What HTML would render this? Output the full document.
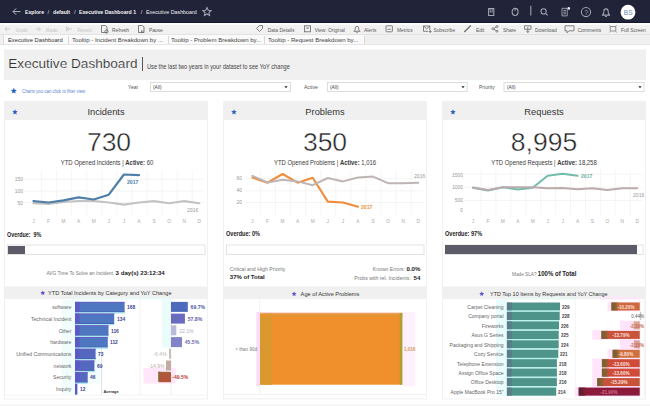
<!DOCTYPE html><html><head><meta charset="utf-8"><style>
html,body{margin:0;padding:0;width:650px;height:406px;overflow:hidden;background:#fff;font-family:"Liberation Sans", sans-serif;}
.t{position:absolute;white-space:nowrap;line-height:1;z-index:5;}
svg{position:absolute;left:0;top:0;}
</style></head><body>
<div style="position:absolute;left:0px;top:0px;width:650px;height:23px;background:#212438;"></div>
<div style="position:absolute;left:0px;top:22px;width:650px;height:1px;background:#15182a;"></div>
<svg width="650" height="406" style="z-index:2" viewBox="0 0 650 406"><g stroke="#b4b6c2" stroke-width="1" fill="none"><path d="M13 11.6h7.5M13 11.6l3.2-3.2M13 11.6l3.2 3.2"/></g><g stroke="#a2a5b3" stroke-width="1.05" fill="none"><path d="M207 7.6l1.25 2.65 2.85.35-2.1 1.95.6 2.85-2.6-1.45-2.6 1.45.6-2.85-2.1-1.95 2.85-.35z"/><path d="M488.6 8.6h5.2v6.8h-5.2z"/><path d="M490.2 8.8v3.6l1-0.9 1 0.9v-3.6" stroke-width="0.8"/><rect x="512.2" y="8.4" width="5.8" height="7" rx="2.9"/><path d="M515.1 8.6v2.4" stroke-width="0.8"/><path d="M530.8 5.8v9.8"/><circle cx="543.6" cy="11.4" r="2.6"/><path d="M545.5 13.3l2.3 2.1"/><path d="M562 8.3h5.2v7.6h-5.2z M563.4 10.4h2.6 M563.4 12.1h2.6 M563.4 13.8h2.6" stroke-width="0.9"/><circle cx="586" cy="12" r="4.6"/><path d="M601.9 15.1h8.2 M602.6 15c1-1 1.3-2.2 1.3-4a2.1 2.1 0 0 1 4.2 0c0 1.8.3 3 1.3 4 M605.1 16.5h1.8"/></g><circle cx="568.8" cy="8.4" r="1.3" fill="#e8e8ee"/><circle cx="628" cy="12.2" r="7.4" fill="#fff"/></svg>


<div class="t" style="left:623.80px;top:10px;font-size:6.5px;color:#6a8ab0;z-index:6;">BS</div>
<div class="t" style="left:584.30px;top:10px;font-size:6.9px;color:#a2a5b3;z-index:6;">?</div>
<div class="t" style="left:25.30px;top:10px;font-size:5.9px;color:#f4f4f7;font-weight:bold;transform:scaleX(0.88);transform-origin:0 0;">Explore</div>
<div class="t" style="left:47.60px;top:9px;font-size:6px;color:#dcdde4;">/</div>
<div class="t" style="left:52.60px;top:10px;font-size:5.9px;color:#f4f4f7;font-weight:bold;transform:scaleX(0.88);transform-origin:0 0;">default</div>
<div class="t" style="left:74.00px;top:9px;font-size:6px;color:#dcdde4;">/</div>
<div class="t" style="left:79.30px;top:10px;font-size:5.9px;color:#f4f4f7;font-weight:bold;transform:scaleX(0.88);transform-origin:0 0;">Executive Dashboard 1</div>
<div class="t" style="left:140.80px;top:9px;font-size:6px;color:#dcdde4;">/</div>
<div class="t" style="left:146.00px;top:9px;font-size:6.0px;color:#ececf0;transform:scaleX(0.89);transform-origin:0 0;">Executive Dashboard</div>
<div style="position:absolute;left:0px;top:23px;width:650px;height:2px;background:#fbfbfb;"></div>
<div style="position:absolute;left:0px;top:25px;width:650px;height:9px;background:#f1f1f1;"></div>
<div style="position:absolute;left:0px;top:34px;width:650px;height:1px;background:#e3e3e3;"></div>
<div class="t" style="left:15.70px;top:29px;font-size:4.9px;color:#c4c4c4;">Undo</div>
<div class="t" style="left:46.00px;top:29px;font-size:4.9px;color:#c4c4c4;">Redo</div>
<div class="t" style="left:77.50px;top:29px;font-size:4.9px;color:#c4c4c4;">Revert</div>
<div class="t" style="left:111.90px;top:29px;font-size:4.9px;color:#5a5a5a;">Refresh</div>
<div class="t" style="left:148.90px;top:29px;font-size:4.9px;color:#5a5a5a;">Pause</div>
<div class="t" style="left:267.70px;top:29px;font-size:4.9px;color:#5a5a5a;">Data Details</div>
<div class="t" style="left:314.80px;top:29px;font-size:4.9px;color:#5a5a5a;">View: Original</div>
<div class="t" style="left:364.00px;top:29px;font-size:4.9px;color:#5a5a5a;">Alerts</div>
<div class="t" style="left:397.00px;top:29px;font-size:4.9px;color:#5a5a5a;">Metrics</div>
<div class="t" style="left:433.40px;top:29px;font-size:4.9px;color:#5a5a5a;">Subscribe</div>
<div class="t" style="left:476.00px;top:29px;font-size:4.9px;color:#5a5a5a;">Edit</div>
<div class="t" style="left:503.00px;top:29px;font-size:4.9px;color:#5a5a5a;">Share</div>
<div class="t" style="left:535.00px;top:29px;font-size:4.9px;color:#5a5a5a;">Download</div>
<div class="t" style="left:577.50px;top:29px;font-size:4.9px;color:#5a5a5a;">Comments</div>
<div class="t" style="left:621.00px;top:29px;font-size:4.9px;color:#5a5a5a;">Full Screen</div>
<svg width="650" height="406" style="z-index:2" viewBox="0 0 650 406"><g stroke="#c4c4c4" stroke-width="0.8" fill="none"><path d="M5 29h5M5 29l2-2M5 29l2 2"/><path d="M35.5 29h5M40.5 29l-2-2M40.5 29l-2 2"/><path d="M66.5 26.5v5M67 29h5M67 29l2-2M67 29l2 2"/></g><g stroke="#666" stroke-width="0.8" fill="none"><path d="M101.5 25.5h4l1.5 1.5v5.5h-5.5z"/><circle cx="106.5" cy="31.5" r="1.6"/><path d="M138.5 25.5h4l1.5 1.5v5.5h-5.5z"/><path d="M141.5 30.5v2.5M143 30.5v2.5"/><path d="M256.5 28.5l3-3h3v3l-3 3z"/><rect x="304.5" y="25.8" width="6" height="6" /><path d="M306 28h3"/><path d="M353.7 31.3h6.6 M354.4 31.2c.8-.8 1-1.8 1-3.3a1.6 1.6 0 0 1 3.2 0c0 1.5.2 2.5 1 3.3 M356.3 32.6h1.4"/><rect x="386" y="25.8" width="6.4" height="6" rx="0.6"/><path d="M387.6 29.3h3.2"/><path d="M429.8 30.2v-4.2h-6.3v5.3h4.6"/><path d="M423.5 26l3.2 2.8 3.1-2.8"/><path d="M428.8 31.6h2.8 M430.2 30.2v2.8"/><path d="M464.3 32l6.5-6.5" stroke-width="1.1"/><circle cx="493" cy="28.8" r="1"/><circle cx="497" cy="26.5" r="1"/><circle cx="497" cy="31.2" r="1"/><path d="M494 28.3l2-1.3M494 29.3l2 1.3"/><path d="M524.5 25.8h6.5v3.5h-6.5z M527.8 27v5.5M526.3 31l1.5 1.5 1.5-1.5"/><path d="M565 25.8h9v5h-5l-2 2v-2h-2z"/><path d="M610.6 26.6h4.8 M610.6 31h4.8 M610.2 27v3.6 M615.8 27v3.6" stroke-width="0.7"/><path d="M609.4 25.4l1.4 1.4 M616.6 25.4l-1.4 1.4 M609.4 32.2l1.4-1.4 M616.6 32.2l-1.4-1.4" stroke-width="0.8"/></g></svg>
<div style="position:absolute;left:0px;top:35px;width:650px;height:9px;background:#f0f0f0;"></div>
<div style="position:absolute;left:4px;top:35px;width:360px;height:9px;background:#fafafa;"></div>
<div style="position:absolute;left:0px;top:44px;width:650px;height:1px;background:#e6e6e6;"></div>
<div style="position:absolute;left:3px;top:35px;width:1px;height:10px;background:#dcdcdc;"></div>
<div style="position:absolute;left:67.8px;top:36px;width:1px;height:8px;background:#d8d8d8;"></div>
<div style="position:absolute;left:167.5px;top:36px;width:1px;height:8px;background:#d8d8d8;"></div>
<div style="position:absolute;left:264px;top:36px;width:1px;height:8px;background:#d8d8d8;"></div>
<div style="position:absolute;left:364px;top:36px;width:1px;height:8px;background:#d8d8d8;"></div>
<div class="t" style="left:8.30px;top:37px;font-size:6.2px;color:#333;transform:scaleX(0.93);transform-origin:0 0;">Executive Dashboard</div>
<div class="t" style="left:72.00px;top:37px;font-size:6.2px;color:#444;transform:scaleX(0.98);transform-origin:0 0;">Tooltip - Incident Breakdown by ...</div>
<div class="t" style="left:171.00px;top:37px;font-size:6.2px;color:#444;transform:scaleX(0.98);transform-origin:0 0;">Tooltip - Problem Breakdown by...</div>
<div class="t" style="left:268.00px;top:37px;font-size:6.2px;color:#444;transform:scaleX(0.98);transform-origin:0 0;">Tooltip - Request Breakdown by...</div>
<div style="position:absolute;left:4px;top:50px;width:642px;height:30px;background:#f0f0f0;"></div>
<div style="position:absolute;left:4px;top:49px;width:642px;height:1px;background:#f6f6f6;"></div>
<div class="t" style="left:8.30px;top:57px;font-size:13.6px;color:#333;-webkit-text-stroke:0.15px #f0f0f0;">Executive Dashboard</div>
<div style="position:absolute;left:142px;top:57px;width:1.3px;height:14px;background:#555;"></div>
<div class="t" style="left:147.00px;top:64px;font-size:6.6px;color:#444;transform:scaleX(0.857);transform-origin:0 0;">Use the last two years in your dataset to see YoY change</div>
<svg width="650" height="406" style="z-index:1" viewBox="0 0 650 406"><polygon points="13.80,87.80 14.65,89.84 16.84,90.01 15.17,91.44 15.68,93.59 13.80,92.44 11.92,93.59 12.43,91.44 10.76,90.01 12.95,89.84" fill="#2b63c4"/><rect x="150.5" y="82.5" width="140.0" height="9" fill="#fff" stroke="#d9d9d9" stroke-width="0.9"/><path d="M284.4 86.2h3.2l-1.6 2z" fill="#222"/><rect x="327.4" y="82.5" width="139.8" height="9" fill="#fff" stroke="#d9d9d9" stroke-width="0.9"/><path d="M461.4 86.2h3.2l-1.6 2z" fill="#222"/><rect x="504" y="82.5" width="140" height="9" fill="#fff" stroke="#d9d9d9" stroke-width="0.9"/><path d="M638.4 86.2h3.2l-1.6 2z" fill="#222"/></svg>
<div class="t" style="left:22.00px;top:89px;font-size:5.2px;color:#5a86d0;transform:scaleX(0.84);transform-origin:0 0;">Charts you can click to filter view</div>
<div class="t" style="left:128.40px;top:85px;font-size:5.6px;color:#555;transform:scaleX(0.9);transform-origin:0 0;">Year</div>
<div class="t" style="left:304.00px;top:85px;font-size:5.6px;color:#555;transform:scaleX(0.9);transform-origin:0 0;">Active</div>
<div class="t" style="left:479.00px;top:85px;font-size:5.6px;color:#555;transform:scaleX(0.9);transform-origin:0 0;">Priority</div>
<div class="t" style="left:153.00px;top:85px;font-size:5.4px;color:#444;transform:scaleX(0.9);transform-origin:0 0;">(All)</div>
<div class="t" style="left:330.00px;top:85px;font-size:5.4px;color:#444;transform:scaleX(0.9);transform-origin:0 0;">(All)</div>
<div class="t" style="left:506.50px;top:85px;font-size:5.4px;color:#444;transform:scaleX(0.9);transform-origin:0 0;">(All)</div>
<svg width="650" height="406" style="z-index:1" viewBox="0 0 650 406"><rect x="4.5" y="101.5" width="203" height="297.5" fill="#fff" stroke="#f1f1f1" stroke-width="1"/><rect x="5" y="101.5" width="202" height="18.5" fill="#f0f0f0"/><polygon points="15.00,109.20 15.77,111.04 17.76,111.20 16.24,112.50 16.70,114.45 15.00,113.41 13.30,114.45 13.76,112.50 12.24,111.20 14.23,111.04" fill="#2c5fb8"/><rect x="5" y="286.5" width="202" height="12.5" fill="#f0f0f0"/><rect x="7.5" y="245" width="197.5" height="9.5" fill="#fff" stroke="#e0e0e0" stroke-width="0.9"/><rect x="223.5" y="101.5" width="203" height="297.5" fill="#fff" stroke="#f1f1f1" stroke-width="1"/><rect x="224" y="101.5" width="202" height="18.5" fill="#f0f0f0"/><polygon points="234.00,109.20 234.77,111.04 236.76,111.20 235.24,112.50 235.70,114.45 234.00,113.41 232.30,114.45 232.76,112.50 231.24,111.20 233.23,111.04" fill="#2c5fb8"/><rect x="224" y="286.5" width="202" height="12.5" fill="#f0f0f0"/><rect x="226.5" y="245" width="197.5" height="9.5" fill="#fff" stroke="#e0e0e0" stroke-width="0.9"/><rect x="442.5" y="101.5" width="203" height="297.5" fill="#fff" stroke="#f1f1f1" stroke-width="1"/><rect x="443" y="101.5" width="202" height="18.5" fill="#f0f0f0"/><polygon points="453.00,109.20 453.77,111.04 455.76,111.20 454.24,112.50 454.70,114.45 453.00,113.41 451.30,114.45 451.76,112.50 450.24,111.20 452.23,111.04" fill="#2c5fb8"/><rect x="443" y="286.5" width="202" height="12.5" fill="#f0f0f0"/><rect x="445.5" y="245" width="197.5" height="9.5" fill="#fff" stroke="#e0e0e0" stroke-width="0.9"/></svg>
<div class="t" style="left:-44.00px;width:300px;text-align:center;top:108px;font-size:9.3px;color:#333;">Incidents</div>
<div class="t" style="left:-41.00px;width:300px;text-align:center;top:129px;font-size:26.5px;color:#222;-webkit-text-stroke:0.45px #fff;">730</div>
<div class="t" style="left:-42.80px;width:300px;text-align:center;top:160px;font-size:6.4px;color:#3a3a3a;transform:scaleX(0.925);transform-origin:50% 0;">YTD Opened Incidents | <b>Active:</b> 60</div>
<div class="t" style="left:175.00px;width:300px;text-align:center;top:108px;font-size:9.3px;color:#333;">Problems</div>
<div class="t" style="left:175.00px;width:300px;text-align:center;top:129px;font-size:26.5px;color:#222;-webkit-text-stroke:0.45px #fff;">350</div>
<div class="t" style="left:175.00px;width:300px;text-align:center;top:160px;font-size:6.4px;color:#3a3a3a;transform:scaleX(0.925);transform-origin:50% 0;">YTD Opened Problems | <b>Active:</b> 1,016</div>
<div class="t" style="left:394.00px;width:300px;text-align:center;top:108px;font-size:9.3px;color:#333;">Requests</div>
<div class="t" style="left:394.00px;width:300px;text-align:center;top:129px;font-size:26.5px;color:#222;-webkit-text-stroke:0.45px #fff;">8,995</div>
<div class="t" style="left:394.00px;width:300px;text-align:center;top:160px;font-size:6.4px;color:#3a3a3a;transform:scaleX(0.925);transform-origin:50% 0;">YTD Opened Requests | <b>Active:</b> 18,258</div>
<div class="t" style="left:7.40px;top:232px;font-size:6.8px;color:#222;font-weight:bold;transform:scaleX(0.79);transform-origin:0 0;">Overdue:&nbsp; 9%</div>
<div class="t" style="left:226.00px;top:231px;font-size:6.8px;color:#222;font-weight:bold;transform:scaleX(0.82);transform-origin:0 0;">Overdue: 0%</div>
<div class="t" style="left:444.80px;top:231px;font-size:6.8px;color:#222;font-weight:bold;transform:scaleX(0.82);transform-origin:0 0;">Overdue: 97%</div>
<div style="position:absolute;left:8px;top:245.8px;width:17px;height:8.2px;background:#5b5c67;z-index:2;"></div>
<div style="position:absolute;left:445px;top:245.2px;width:192px;height:9px;background:#5b5c67;z-index:2;"></div>
<div class="t" style="left:115.60px;top:270px;font-size:6.1px;color:#222;font-weight:bold;">3 day(s) 23:12:34</div>
<div class="t" style="left:-187.00px;width:300px;text-align:right;top:272px;font-size:4.85px;color:#777;">AVG Time To Solve an Incident</div>
<div class="t" style="left:229.80px;top:267px;font-size:5.2px;color:#777;">Critical and High Priority</div>
<div class="t" style="left:229.80px;top:274px;font-size:6.0px;color:#222;font-weight:bold;">37% of Total</div>
<div class="t" style="left:120.40px;width:300px;text-align:right;top:268px;font-size:5.1px;color:#777;margin-top:-1.6px;">Known Errors: <b style="color:#222;font-size:6.1px">0.0%</b></div>
<div class="t" style="left:120.40px;width:300px;text-align:right;top:277px;font-size:5.2px;color:#777;margin-top:-2.4px;">Probs with rel. Incidents: &nbsp;<b style="color:#222;font-size:6.1px">54</b></div>
<div class="t" style="left:512.20px;top:271px;font-size:4.9px;color:#777;transform:scaleX(0.96);transform-origin:0 0;">Made SLA? <b style="color:#222;font-size:6.3px">100% of Total</b></div>
<svg width="650" height="406" style="z-index:2" viewBox="0 0 650 406"><polygon points="42.80,290.40 43.49,292.05 45.27,292.20 43.91,293.36 44.33,295.10 42.80,294.17 41.27,295.10 41.69,293.36 40.33,292.20 42.11,292.05" fill="#5a4fd0"/><polygon points="294.10,291.40 294.79,293.05 296.57,293.20 295.21,294.36 295.63,296.10 294.10,295.17 292.57,296.10 292.99,294.36 291.63,293.20 293.41,293.05" fill="#5a4fd0"/><polygon points="481.70,291.30 482.39,292.95 484.17,293.10 482.81,294.26 483.23,296.00 481.70,295.07 480.17,296.00 480.59,294.26 479.23,293.10 481.01,292.95" fill="#5a4fd0"/></svg>
<div class="t" style="left:48.00px;top:291px;font-size:5.6px;color:#333;">YTD Total Incidents by Category and YoY Change</div>
<div class="t" style="left:300.60px;top:292px;font-size:5.7px;color:#333;">Age of Active Problems</div>
<div class="t" style="left:489.50px;top:292px;font-size:5.8px;color:#333;transform:scaleX(0.94);transform-origin:0 0;">YTD Top 10 Items by Requests and YoY Change</div>
<svg width="650" height="406" style="z-index:2" viewBox="0 0 650 406"><path d="M23 179.2H204" stroke="#f1f1f1" stroke-width="0.8"/><path d="M23 191H204" stroke="#f1f1f1" stroke-width="0.8"/><path d="M23 202.5H204" stroke="#f1f1f1" stroke-width="0.8"/><path d="M41.4 170V215" stroke="#f3f3f3" stroke-width="0.8"/><path d="M56.5 170V215" stroke="#f3f3f3" stroke-width="0.8"/><path d="M71.6 170V215" stroke="#f3f3f3" stroke-width="0.8"/><path d="M86.7 170V215" stroke="#f3f3f3" stroke-width="0.8"/><path d="M101.8 170V215" stroke="#f3f3f3" stroke-width="0.8"/><path d="M116.8 170V215" stroke="#f3f3f3" stroke-width="0.8"/><path d="M131.9 170V215" stroke="#f3f3f3" stroke-width="0.8"/><path d="M147.0 170V215" stroke="#f3f3f3" stroke-width="0.8"/><path d="M162.1 170V215" stroke="#f3f3f3" stroke-width="0.8"/><path d="M177.2 170V215" stroke="#f3f3f3" stroke-width="0.8"/><path d="M192.2 170V215" stroke="#f3f3f3" stroke-width="0.8"/><polyline points="33.4,203.3 48.5,204.0 63.6,202.0 78.6,201.0 93.7,201.0 108.8,202.5 123.9,204.6 139.0,202.5 154.0,201.1 169.1,203.3 184.2,201.1 199.3,203.3" fill="none" stroke="#c3c3c3" stroke-width="2.1" stroke-linejoin="round" stroke-linecap="round"/><polyline points="33.4,201.1 48.5,202.5 63.6,200.4 78.6,197.3 93.7,199.5 108.8,194.7 123.9,174.5 139.0,175.2" fill="none" stroke="#4f7fa8" stroke-width="2.2" stroke-linejoin="round" stroke-linecap="round"/><path d="M245.5 178.7H423" stroke="#f1f1f1" stroke-width="0.8"/><path d="M245.5 190.8H423" stroke="#f1f1f1" stroke-width="0.8"/><path d="M245.5 202.5H423" stroke="#f1f1f1" stroke-width="0.8"/><path d="M260.4 170V215" stroke="#f3f3f3" stroke-width="0.8"/><path d="M275.5 170V215" stroke="#f3f3f3" stroke-width="0.8"/><path d="M290.6 170V215" stroke="#f3f3f3" stroke-width="0.8"/><path d="M305.7 170V215" stroke="#f3f3f3" stroke-width="0.8"/><path d="M320.8 170V215" stroke="#f3f3f3" stroke-width="0.8"/><path d="M335.8 170V215" stroke="#f3f3f3" stroke-width="0.8"/><path d="M350.9 170V215" stroke="#f3f3f3" stroke-width="0.8"/><path d="M366.0 170V215" stroke="#f3f3f3" stroke-width="0.8"/><path d="M381.1 170V215" stroke="#f3f3f3" stroke-width="0.8"/><path d="M396.2 170V215" stroke="#f3f3f3" stroke-width="0.8"/><path d="M411.2 170V215" stroke="#f3f3f3" stroke-width="0.8"/><polyline points="252.4,177.5 267.5,182.7 282.6,174.0 297.6,182.7 312.7,177.8 327.8,201.6 342.9,202.5 358.0,206.8" fill="none" stroke="#f08c3c" stroke-width="2.1" stroke-linejoin="round" stroke-linecap="round"/><polyline points="252.4,175.8 267.5,182.5 282.6,179.7 297.6,181.4 312.7,185.2 327.8,178.0 342.9,181.4 358.0,177.5 373.0,176.6 388.1,183.2 403.2,183.2 418.3,182.7" fill="none" stroke="#bfb5b5" stroke-width="2.0" stroke-linejoin="round" stroke-linecap="round"/><path d="M464 174.2H642" stroke="#f1f1f1" stroke-width="0.8"/><path d="M464 187.2H642" stroke="#f1f1f1" stroke-width="0.8"/><path d="M464 200.5H642" stroke="#f1f1f1" stroke-width="0.8"/><path d="M481.0 170V215" stroke="#f3f3f3" stroke-width="0.8"/><path d="M495.9 170V215" stroke="#f3f3f3" stroke-width="0.8"/><path d="M510.8 170V215" stroke="#f3f3f3" stroke-width="0.8"/><path d="M525.8 170V215" stroke="#f3f3f3" stroke-width="0.8"/><path d="M540.7 170V215" stroke="#f3f3f3" stroke-width="0.8"/><path d="M555.6 170V215" stroke="#f3f3f3" stroke-width="0.8"/><path d="M570.5 170V215" stroke="#f3f3f3" stroke-width="0.8"/><path d="M585.5 170V215" stroke="#f3f3f3" stroke-width="0.8"/><path d="M600.4 170V215" stroke="#f3f3f3" stroke-width="0.8"/><path d="M615.3 170V215" stroke="#f3f3f3" stroke-width="0.8"/><path d="M630.3 170V215" stroke="#f3f3f3" stroke-width="0.8"/><polyline points="473.0,187.8 487.9,190.4 502.9,187.3 517.8,189.5 532.7,187.8 547.6,175.8 562.6,173.7 577.5,175.8" fill="none" stroke="#72bcab" stroke-width="2.0" stroke-linejoin="round" stroke-linecap="round"/><polyline points="473.0,187.5 487.9,190.0 502.9,187.3 517.8,187.3 532.7,187.3 547.6,188.3 562.6,188.0 577.5,189.2 592.4,188.3 607.4,190.0 622.3,188.3 637.2,188.3" fill="none" stroke="#bcaaac" stroke-width="2.1" stroke-linejoin="round" stroke-linecap="round"/></svg>
<div class="t" style="left:-116.60px;width:300px;text-align:center;top:220px;font-size:4.8px;color:#aaa;">J</div>
<div class="t" style="left:-101.52px;width:300px;text-align:center;top:220px;font-size:4.8px;color:#aaa;">F</div>
<div class="t" style="left:-86.44px;width:300px;text-align:center;top:220px;font-size:4.8px;color:#aaa;">M</div>
<div class="t" style="left:-71.36px;width:300px;text-align:center;top:220px;font-size:4.8px;color:#aaa;">A</div>
<div class="t" style="left:-56.28px;width:300px;text-align:center;top:220px;font-size:4.8px;color:#aaa;">M</div>
<div class="t" style="left:-41.20px;width:300px;text-align:center;top:220px;font-size:4.8px;color:#aaa;">J</div>
<div class="t" style="left:-26.12px;width:300px;text-align:center;top:220px;font-size:4.8px;color:#aaa;">J</div>
<div class="t" style="left:-11.04px;width:300px;text-align:center;top:220px;font-size:4.8px;color:#aaa;">A</div>
<div class="t" style="left:4.04px;width:300px;text-align:center;top:220px;font-size:4.8px;color:#aaa;">S</div>
<div class="t" style="left:19.12px;width:300px;text-align:center;top:220px;font-size:4.8px;color:#aaa;">O</div>
<div class="t" style="left:34.20px;width:300px;text-align:center;top:220px;font-size:4.8px;color:#aaa;">N</div>
<div class="t" style="left:49.28px;width:300px;text-align:center;top:220px;font-size:4.8px;color:#aaa;">D</div>
<div class="t" style="left:102.40px;width:300px;text-align:center;top:220px;font-size:4.8px;color:#aaa;">J</div>
<div class="t" style="left:117.48px;width:300px;text-align:center;top:220px;font-size:4.8px;color:#aaa;">F</div>
<div class="t" style="left:132.56px;width:300px;text-align:center;top:220px;font-size:4.8px;color:#aaa;">M</div>
<div class="t" style="left:147.64px;width:300px;text-align:center;top:220px;font-size:4.8px;color:#aaa;">A</div>
<div class="t" style="left:162.72px;width:300px;text-align:center;top:220px;font-size:4.8px;color:#aaa;">M</div>
<div class="t" style="left:177.80px;width:300px;text-align:center;top:220px;font-size:4.8px;color:#aaa;">J</div>
<div class="t" style="left:192.88px;width:300px;text-align:center;top:220px;font-size:4.8px;color:#aaa;">J</div>
<div class="t" style="left:207.96px;width:300px;text-align:center;top:220px;font-size:4.8px;color:#aaa;">A</div>
<div class="t" style="left:223.04px;width:300px;text-align:center;top:220px;font-size:4.8px;color:#aaa;">S</div>
<div class="t" style="left:238.12px;width:300px;text-align:center;top:220px;font-size:4.8px;color:#aaa;">O</div>
<div class="t" style="left:253.20px;width:300px;text-align:center;top:220px;font-size:4.8px;color:#aaa;">N</div>
<div class="t" style="left:268.28px;width:300px;text-align:center;top:220px;font-size:4.8px;color:#aaa;">D</div>
<div class="t" style="left:323.00px;width:300px;text-align:center;top:220px;font-size:4.8px;color:#aaa;">J</div>
<div class="t" style="left:337.93px;width:300px;text-align:center;top:220px;font-size:4.8px;color:#aaa;">F</div>
<div class="t" style="left:352.86px;width:300px;text-align:center;top:220px;font-size:4.8px;color:#aaa;">M</div>
<div class="t" style="left:367.79px;width:300px;text-align:center;top:220px;font-size:4.8px;color:#aaa;">A</div>
<div class="t" style="left:382.72px;width:300px;text-align:center;top:220px;font-size:4.8px;color:#aaa;">M</div>
<div class="t" style="left:397.65px;width:300px;text-align:center;top:220px;font-size:4.8px;color:#aaa;">J</div>
<div class="t" style="left:412.58px;width:300px;text-align:center;top:220px;font-size:4.8px;color:#aaa;">J</div>
<div class="t" style="left:427.51px;width:300px;text-align:center;top:220px;font-size:4.8px;color:#aaa;">A</div>
<div class="t" style="left:442.44px;width:300px;text-align:center;top:220px;font-size:4.8px;color:#aaa;">S</div>
<div class="t" style="left:457.37px;width:300px;text-align:center;top:220px;font-size:4.8px;color:#aaa;">O</div>
<div class="t" style="left:472.30px;width:300px;text-align:center;top:220px;font-size:4.8px;color:#aaa;">N</div>
<div class="t" style="left:487.23px;width:300px;text-align:center;top:220px;font-size:4.8px;color:#aaa;">D</div>
<div class="t" style="left:-277.00px;width:300px;text-align:right;top:177px;font-size:5.8px;color:#999;transform:scaleX(0.86);transform-origin:100% 0;">150</div>
<div class="t" style="left:-277.00px;width:300px;text-align:right;top:189px;font-size:5.8px;color:#999;transform:scaleX(0.86);transform-origin:100% 0;">100</div>
<div class="t" style="left:-277.00px;width:300px;text-align:right;top:201px;font-size:5.8px;color:#999;transform:scaleX(0.86);transform-origin:100% 0;">50</div>
<div class="t" style="left:-58.00px;width:300px;text-align:right;top:176px;font-size:5.8px;color:#999;transform:scaleX(0.86);transform-origin:100% 0;">60</div>
<div class="t" style="left:-58.00px;width:300px;text-align:right;top:188px;font-size:5.8px;color:#999;transform:scaleX(0.86);transform-origin:100% 0;">40</div>
<div class="t" style="left:-58.00px;width:300px;text-align:right;top:200px;font-size:5.8px;color:#999;transform:scaleX(0.86);transform-origin:100% 0;">20</div>
<div class="t" style="left:162.70px;width:300px;text-align:right;top:173px;font-size:5.8px;color:#999;transform:scaleX(0.86);transform-origin:100% 0;">1500</div>
<div class="t" style="left:162.70px;width:300px;text-align:right;top:185px;font-size:5.8px;color:#999;transform:scaleX(0.86);transform-origin:100% 0;">1000</div>
<div class="t" style="left:162.70px;width:300px;text-align:right;top:198px;font-size:5.8px;color:#999;transform:scaleX(0.86);transform-origin:100% 0;">500</div>
<div class="t" style="left:162.70px;width:300px;text-align:right;top:208px;font-size:5.8px;color:#999;transform:scaleX(0.86);transform-origin:100% 0;">0</div>
<div class="t" style="left:127.20px;top:179px;font-size:6.0px;color:#4f7fa8;font-weight:bold;transform:scaleX(0.85);transform-origin:0 0;">2017</div>
<div class="t" style="left:187.40px;top:208px;font-size:5.9px;color:#999;transform:scaleX(0.86);transform-origin:0 0;">2016</div>
<div class="t" style="left:361.30px;top:204px;font-size:6.0px;color:#e8903a;font-weight:bold;transform:scaleX(0.85);transform-origin:0 0;">2017</div>
<div class="t" style="left:413.50px;top:174px;font-size:5.9px;color:#999;transform:scaleX(0.86);transform-origin:0 0;">2016</div>
<div class="t" style="left:580.80px;top:173px;font-size:6.0px;color:#66b0a0;font-weight:bold;transform:scaleX(0.85);transform-origin:0 0;">2017</div>
<div class="t" style="left:632.50px;top:193px;font-size:5.9px;color:#999;transform:scaleX(0.86);transform-origin:0 0;">2016</div>
<div style="position:absolute;left:0px;top:404px;width:650px;height:2px;background:#f6f6f6;"></div>
<svg width="650" height="406" style="z-index:2" viewBox="0 0 650 406"><rect x="62" y="299.5" width="38" height="84" fill="#f1fcfc"/><rect x="62" y="383" width="13" height="11" fill="#f1fcfc"/><rect x="162" y="299.5" width="9" height="48" fill="#eafcfc"/><rect x="143.4" y="368" width="32.3" height="15.6" fill="#ffe6fa"/><path d="M101.6 302V395" stroke="#d8d8d8" stroke-width="0.8"/><path d="M140 299.5V395" stroke="#f0f0f0" stroke-width="0.8"/><path d="M171 299.5V395" stroke="#ececec" stroke-width="0.8"/><path d="M5 395.2H207" stroke="#f1f1f1" stroke-width="0.8"/><rect x="75" y="301.9" width="49.6" height="10.4" fill="#4f76c0"/><rect x="75" y="301.9" width="49.6" height="0.9" fill="#6a5cc4"/><rect x="75" y="311.5" width="49.6" height="0.8" fill="#3f62a8"/><rect x="75" y="301.9" width="4.5" height="10.4" fill="#5b5ac6"/><rect x="75" y="312.3" width="49.6" height="1.3" fill="#a8e4f2"/><rect x="75" y="313.6" width="39.2" height="10.4" fill="#4f76c0"/><rect x="75" y="313.6" width="39.2" height="0.9" fill="#6a5cc4"/><rect x="75" y="323.2" width="39.2" height="0.8" fill="#3f62a8"/><rect x="75" y="313.6" width="4.5" height="10.4" fill="#5b5ac6"/><rect x="75" y="324.0" width="39.2" height="1.3" fill="#a8e4f2"/><rect x="75" y="325.3" width="33.5" height="10.4" fill="#4f76c0"/><rect x="75" y="325.3" width="33.5" height="0.9" fill="#6a5cc4"/><rect x="75" y="334.9" width="33.5" height="0.8" fill="#3f62a8"/><rect x="75" y="325.3" width="4.5" height="10.4" fill="#5b5ac6"/><rect x="75" y="335.7" width="33.5" height="1.3" fill="#a8e4f2"/><rect x="75" y="337.1" width="32.8" height="10.4" fill="#4f76c0"/><rect x="75" y="337.1" width="32.8" height="0.9" fill="#6a5cc4"/><rect x="75" y="346.7" width="32.8" height="0.8" fill="#3f62a8"/><rect x="75" y="337.1" width="4.5" height="10.4" fill="#5b5ac6"/><rect x="75" y="347.5" width="32.8" height="1.3" fill="#a8e4f2"/><rect x="75" y="348.8" width="20.6" height="10.4" fill="#5568c0"/><rect x="75" y="348.8" width="20.6" height="0.9" fill="#6a5cc4"/><rect x="75" y="358.4" width="20.6" height="0.8" fill="#3f62a8"/><rect x="75" y="348.8" width="4.5" height="10.4" fill="#5b5ac6"/><rect x="75" y="359.2" width="20.6" height="1.3" fill="#a8e4f2"/><rect x="75" y="360.5" width="19.4" height="10.4" fill="#5568c0"/><rect x="75" y="360.5" width="19.4" height="0.9" fill="#6a5cc4"/><rect x="75" y="370.1" width="19.4" height="0.8" fill="#3f62a8"/><rect x="75" y="360.5" width="4.5" height="10.4" fill="#5b5ac6"/><rect x="75" y="370.9" width="19.4" height="1.3" fill="#a8e4f2"/><rect x="75" y="372.2" width="12.7" height="10.4" fill="#5568c0"/><rect x="75" y="372.2" width="12.7" height="0.9" fill="#6a5cc4"/><rect x="75" y="381.8" width="12.7" height="0.8" fill="#3f62a8"/><rect x="75" y="372.2" width="4.5" height="10.4" fill="#5b5ac6"/><rect x="75" y="382.6" width="12.7" height="1.3" fill="#a8e4f2"/><rect x="75" y="383.9" width="2.2" height="10.4" fill="#5568c0"/><rect x="75" y="383.9" width="2.2" height="0.9" fill="#6a5cc4"/><rect x="75" y="393.5" width="2.2" height="0.8" fill="#3f62a8"/><rect x="75" y="383.9" width="2.2" height="10.4" fill="#5b5ac6"/><rect x="171" y="301.9" width="16.8" height="10" fill="#4d6abd"/><rect x="171" y="313.6" width="13.9" height="10" fill="#6a6bbf"/><rect x="171" y="325.3" width="5.3" height="10" fill="#b9b9db"/><rect x="171" y="337.1" width="11.0" height="10" fill="#8283c8"/><rect x="169.0" y="348.8" width="2.0" height="10" fill="#cbbdb8"/><rect x="166.0" y="360.5" width="5.0" height="10" fill="#c3aba2"/><rect x="159.1" y="372.2" width="11.9" height="10" fill="#b3553a"/><rect x="158.2" y="371.8" width="11.9" height="1" fill="#8a6a30"/><rect x="158.2" y="371.8" width="2" height="10" fill="#8a6a30"/><path d="M259.5 299.5V394" stroke="#f0f0f0" stroke-width="0.8"/><path d="M224 394.5H426" stroke="#f0f0f0" stroke-width="0.8"/><rect x="256.3" y="311.8" width="3.8" height="74.5" fill="#fbdcfb"/><rect x="402.3" y="311.8" width="13" height="74.5" fill="#fdf1fd"/><rect x="260.1" y="313.1" width="142.2" height="71.6" fill="#f0902c"/><rect x="260.1" y="313.1" width="11.6" height="71.6" fill="#d9982e"/><rect x="260.1" y="313.6" width="142.2" height="3.5" fill="#e4952f"/><rect x="260.1" y="312.6" width="142.2" height="1" fill="#f0a888"/><rect x="399.8" y="313.1" width="2.4" height="71.6" fill="#a9a232"/><rect x="495.8" y="299.5" width="11" height="97" fill="#eafcfc"/><rect x="506" y="297.5" width="70" height="2" fill="#e4f8f4"/><rect x="600" y="297" width="40" height="2.5" fill="#fde6f8"/><rect x="75" y="297.5" width="96" height="2" fill="#e8f8f8"/><path d="M575.3 299.5V397" stroke="#e6e6e6" stroke-width="0.8" stroke-dasharray="1 1"/><path d="M644.1 299.5V397" stroke="#eeeeee" stroke-width="0.8"/><rect x="506.9" y="302.5" width="53.1" height="8.1" fill="#4e948b"/><rect x="506.9" y="302.5" width="5" height="8.1" fill="#5a7e88"/><rect x="506.9" y="310.6" width="53.1" height="1.4" fill="#b4f2ec"/><rect x="607.6" y="301.8" width="32.4" height="9.5" fill="#ffe4fb"/><rect x="506.9" y="311.9" width="52.8" height="8.1" fill="#4e948b"/><rect x="506.9" y="311.9" width="5" height="8.1" fill="#5a7e88"/><rect x="506.9" y="320.1" width="52.8" height="1.4" fill="#b4f2ec"/><rect x="506.9" y="321.4" width="52.1" height="8.1" fill="#4e948b"/><rect x="506.9" y="321.4" width="5" height="8.1" fill="#5a7e88"/><rect x="506.9" y="329.5" width="52.1" height="1.4" fill="#b4f2ec"/><rect x="620" y="320.7" width="20.0" height="9.5" fill="#ffe4fb"/><rect x="506.9" y="330.9" width="51.8" height="8.1" fill="#4e948b"/><rect x="506.9" y="330.9" width="5" height="8.1" fill="#5a7e88"/><rect x="506.9" y="339.0" width="51.8" height="1.4" fill="#b4f2ec"/><rect x="592.3" y="330.2" width="47.7" height="9.5" fill="#ffe4fb"/><rect x="506.9" y="340.3" width="51.8" height="8.1" fill="#4e948b"/><rect x="506.9" y="340.3" width="5" height="8.1" fill="#5a7e88"/><rect x="506.9" y="348.4" width="51.8" height="1.4" fill="#b4f2ec"/><rect x="620" y="339.6" width="20.0" height="9.5" fill="#ffe4fb"/><rect x="506.9" y="349.8" width="51.4" height="8.1" fill="#4e948b"/><rect x="506.9" y="349.8" width="5" height="8.1" fill="#5a7e88"/><rect x="506.9" y="357.9" width="51.4" height="1.4" fill="#b4f2ec"/><rect x="607.6" y="349.1" width="32.4" height="9.5" fill="#ffe4fb"/><rect x="506.9" y="359.2" width="50.0" height="8.1" fill="#4e948b"/><rect x="506.9" y="359.2" width="5" height="8.1" fill="#5a7e88"/><rect x="506.9" y="367.3" width="50.0" height="1.4" fill="#b4f2ec"/><rect x="592.3" y="358.5" width="47.7" height="9.5" fill="#ffe4fb"/><rect x="506.9" y="368.6" width="50.0" height="8.1" fill="#4e948b"/><rect x="506.9" y="368.6" width="5" height="8.1" fill="#5a7e88"/><rect x="506.9" y="376.8" width="50.0" height="1.4" fill="#b4f2ec"/><rect x="592.3" y="367.9" width="47.7" height="9.5" fill="#ffe4fb"/><rect x="506.9" y="378.1" width="50.0" height="8.1" fill="#4e948b"/><rect x="506.9" y="378.1" width="5" height="8.1" fill="#5a7e88"/><rect x="506.9" y="386.2" width="50.0" height="1.4" fill="#b4f2ec"/><rect x="592.3" y="377.4" width="47.7" height="9.5" fill="#ffe4fb"/><rect x="506.9" y="387.6" width="49.3" height="8.1" fill="#4e948b"/><rect x="506.9" y="387.6" width="5" height="8.1" fill="#5a7e88"/><rect x="575" y="386.9" width="65.0" height="9.5" fill="#ffe4fb"/><rect x="611.4" y="302.5" width="28.6" height="8" fill="#d0683e"/><linearGradient id="g0" x1="0" x2="1" y1="0" y2="0"><stop offset="0" stop-color="#7a6232"/><stop offset="0.5" stop-color="#7a6232"/><stop offset="1" stop-color="#d0683e"/></linearGradient><rect x="611.4" y="302.5" width="7" height="8" fill="url(#g0)"/><rect x="640" y="311.9" width="1.2" height="8" fill="#bbb"/><rect x="633.6" y="321.4" width="6.4" height="8" fill="#d8a890"/><rect x="601.4" y="330.9" width="38.6" height="8" fill="#c8523a"/><linearGradient id="g3" x1="0" x2="1" y1="0" y2="0"><stop offset="0" stop-color="#7a6232"/><stop offset="0.5" stop-color="#7a6232"/><stop offset="1" stop-color="#c8523a"/></linearGradient><rect x="601.4" y="330.9" width="7" height="8" fill="url(#g3)"/><rect x="633.9" y="340.3" width="6.1" height="8" fill="#d8a090"/><rect x="612.6" y="349.8" width="27.4" height="8" fill="#d0703f"/><linearGradient id="g5" x1="0" x2="1" y1="0" y2="0"><stop offset="0" stop-color="#7a6232"/><stop offset="0.5" stop-color="#7a6232"/><stop offset="1" stop-color="#d0703f"/></linearGradient><rect x="612.6" y="349.8" width="7" height="8" fill="url(#g5)"/><rect x="601.9" y="359.2" width="38.1" height="8" fill="#d04c3a"/><linearGradient id="g6" x1="0" x2="1" y1="0" y2="0"><stop offset="0" stop-color="#7a6232"/><stop offset="0.5" stop-color="#7a6232"/><stop offset="1" stop-color="#d04c3a"/></linearGradient><rect x="601.9" y="359.2" width="7" height="8" fill="url(#g6)"/><rect x="601.9" y="368.6" width="38.1" height="8" fill="#d04c3a"/><linearGradient id="g7" x1="0" x2="1" y1="0" y2="0"><stop offset="0" stop-color="#7a6232"/><stop offset="0.5" stop-color="#7a6232"/><stop offset="1" stop-color="#d04c3a"/></linearGradient><rect x="601.9" y="368.6" width="7" height="8" fill="url(#g7)"/><rect x="597.2" y="378.1" width="42.8" height="8" fill="#c8523a"/><linearGradient id="g8" x1="0" x2="1" y1="0" y2="0"><stop offset="0" stop-color="#7a6232"/><stop offset="0.5" stop-color="#7a6232"/><stop offset="1" stop-color="#c8523a"/></linearGradient><rect x="597.2" y="378.1" width="7" height="8" fill="url(#g8)"/><rect x="578.7" y="387.6" width="61.3" height="8" fill="#8c1a3a"/><linearGradient id="g9" x1="0" x2="1" y1="0" y2="0"><stop offset="0" stop-color="#5e2030"/><stop offset="0.5" stop-color="#5e2030"/><stop offset="1" stop-color="#8c1a3a"/></linearGradient><rect x="578.7" y="387.6" width="7" height="8" fill="url(#g9)"/><path d="M640 299.5V397" stroke="#e0e0e0" stroke-width="0.6"/></svg>
<div class="t" style="left:-228.60px;width:300px;text-align:right;top:305px;font-size:5.1px;color:#666;">software</div>
<div class="t" style="left:127.00px;top:305px;font-size:5.5px;color:#3c4290;font-weight:bold;transform:scaleX(0.88);transform-origin:0 0;">168</div>
<div class="t" style="left:-228.60px;width:300px;text-align:right;top:317px;font-size:5.1px;color:#666;">Technical Incident</div>
<div class="t" style="left:116.60px;top:317px;font-size:5.5px;color:#3c4290;font-weight:bold;transform:scaleX(0.88);transform-origin:0 0;">134</div>
<div class="t" style="left:-228.60px;width:300px;text-align:right;top:329px;font-size:5.1px;color:#666;">Other</div>
<div class="t" style="left:110.90px;top:329px;font-size:5.5px;color:#3c4290;font-weight:bold;transform:scaleX(0.88);transform-origin:0 0;">116</div>
<div class="t" style="left:-228.60px;width:300px;text-align:right;top:340px;font-size:5.1px;color:#666;">hardware</div>
<div class="t" style="left:110.20px;top:340px;font-size:5.5px;color:#3c4290;font-weight:bold;transform:scaleX(0.88);transform-origin:0 0;">112</div>
<div class="t" style="left:-228.60px;width:300px;text-align:right;top:352px;font-size:5.1px;color:#666;">Unified Communications</div>
<div class="t" style="left:98.00px;top:352px;font-size:5.5px;color:#3c4290;font-weight:bold;transform:scaleX(0.88);transform-origin:0 0;">73</div>
<div class="t" style="left:-228.60px;width:300px;text-align:right;top:364px;font-size:5.1px;color:#666;">network</div>
<div class="t" style="left:96.80px;top:364px;font-size:5.5px;color:#3c4290;font-weight:bold;transform:scaleX(0.88);transform-origin:0 0;">69</div>
<div class="t" style="left:-228.60px;width:300px;text-align:right;top:375px;font-size:5.1px;color:#666;">Security</div>
<div class="t" style="left:90.10px;top:375px;font-size:5.5px;color:#3c4290;font-weight:bold;transform:scaleX(0.88);transform-origin:0 0;">46</div>
<div class="t" style="left:-228.60px;width:300px;text-align:right;top:387px;font-size:5.1px;color:#666;">Inquiry</div>
<div class="t" style="left:79.60px;top:387px;font-size:5.5px;color:#3c4290;font-weight:bold;transform:scaleX(0.88);transform-origin:0 0;">12</div>
<div class="t" style="left:190.60px;top:305px;font-size:5.1px;color:#4a57a8;font-weight:bold;">69.7%</div>
<div class="t" style="left:187.73px;top:317px;font-size:5.1px;color:#5a5aa8;font-weight:bold;">57.8%</div>
<div class="t" style="left:179.13px;top:329px;font-size:5.1px;color:#b0b0c8;">22.1%</div>
<div class="t" style="left:184.77px;top:340px;font-size:5.1px;color:#6a6ab0;font-weight:bold;">45.5%</div>
<div class="t" style="left:-133.34px;width:300px;text-align:right;top:352px;font-size:5.1px;color:#c0b8b8;">-6.4%</div>
<div class="t" style="left:-135.39px;width:300px;text-align:right;top:364px;font-size:5.1px;color:#c4aca8;">-14.9%</div>
<div class="t" style="left:172.20px;top:375px;font-size:5.1px;color:#c8403c;font-weight:bold;">-49.5%</div>
<div class="t" style="left:103.40px;top:390px;font-size:3.9px;color:#333;font-weight:bold;">Average</div>
<div class="t" style="left:-43.20px;width:300px;text-align:right;top:347px;font-size:5.3px;color:#777;transform:scaleX(0.86);transform-origin:100% 0;">&gt; than 90d</div>
<div class="t" style="left:404.40px;top:347px;font-size:5.3px;color:#d39a55;font-weight:bold;transform:scaleX(0.86);transform-origin:0 0;">1,016</div>
<div class="t" style="left:203.50px;width:300px;text-align:right;top:305px;font-size:5.0px;color:#666;">Carpet Cleaning</div>
<div class="t" style="left:562.00px;top:305px;font-size:5.3px;color:#444;font-weight:bold;transform:scaleX(0.86);transform-origin:0 0;">229</div>
<div class="t" style="left:475.72px;width:300px;text-align:center;top:305px;font-size:5.3px;color:#fbe0dc;font-weight:bold;transform:scaleX(0.86);transform-origin:50% 0;">-10.20%</div>
<div class="t" style="left:203.50px;width:300px;text-align:right;top:314px;font-size:5.0px;color:#666;">Company portal</div>
<div class="t" style="left:561.70px;top:314px;font-size:5.3px;color:#444;font-weight:bold;transform:scaleX(0.86);transform-origin:0 0;">228</div>
<div class="t" style="left:344.00px;width:300px;text-align:right;top:314px;font-size:5.2px;color:#555;transform:scaleX(0.86);transform-origin:100% 0;">0.44%</div>
<div class="t" style="left:203.50px;width:300px;text-align:right;top:324px;font-size:5.0px;color:#666;">Fireworks</div>
<div class="t" style="left:561.00px;top:324px;font-size:5.3px;color:#444;font-weight:bold;transform:scaleX(0.86);transform-origin:0 0;">226</div>
<div class="t" style="left:344.00px;width:300px;text-align:right;top:324px;font-size:5.2px;color:#c86a5a;font-weight:bold;transform:scaleX(0.86);transform-origin:100% 0;">-2.30%</div>
<div class="t" style="left:203.50px;width:300px;text-align:right;top:333px;font-size:5.0px;color:#666;">Asus G Series</div>
<div class="t" style="left:560.70px;top:333px;font-size:5.3px;color:#444;font-weight:bold;transform:scaleX(0.86);transform-origin:0 0;">225</div>
<div class="t" style="left:470.69px;width:300px;text-align:center;top:333px;font-size:5.3px;color:#fbe0dc;font-weight:bold;transform:scaleX(0.86);transform-origin:50% 0;">-13.79%</div>
<div class="t" style="left:203.50px;width:300px;text-align:right;top:343px;font-size:5.0px;color:#666;">Packaging and Shipping</div>
<div class="t" style="left:560.70px;top:343px;font-size:5.3px;color:#444;font-weight:bold;transform:scaleX(0.86);transform-origin:0 0;">224</div>
<div class="t" style="left:344.00px;width:300px;text-align:right;top:343px;font-size:5.2px;color:#c86a5a;font-weight:bold;transform:scaleX(0.86);transform-origin:100% 0;">-2.18%</div>
<div class="t" style="left:203.50px;width:300px;text-align:right;top:352px;font-size:5.0px;color:#666;">Cozy Service</div>
<div class="t" style="left:560.30px;top:352px;font-size:5.3px;color:#444;font-weight:bold;transform:scaleX(0.86);transform-origin:0 0;">221</div>
<div class="t" style="left:476.28px;width:300px;text-align:center;top:352px;font-size:5.3px;color:#fbe0dc;font-weight:bold;transform:scaleX(0.86);transform-origin:50% 0;">-9.80%</div>
<div class="t" style="left:203.50px;width:300px;text-align:right;top:362px;font-size:5.0px;color:#666;">Telephone Extension</div>
<div class="t" style="left:558.90px;top:362px;font-size:5.3px;color:#444;font-weight:bold;transform:scaleX(0.86);transform-origin:0 0;">218</div>
<div class="t" style="left:470.96px;width:300px;text-align:center;top:362px;font-size:5.3px;color:#fbe0dc;font-weight:bold;transform:scaleX(0.86);transform-origin:50% 0;">-13.60%</div>
<div class="t" style="left:203.50px;width:300px;text-align:right;top:371px;font-size:5.0px;color:#666;">Assign Office Space</div>
<div class="t" style="left:558.90px;top:371px;font-size:5.3px;color:#444;font-weight:bold;transform:scaleX(0.86);transform-origin:0 0;">218</div>
<div class="t" style="left:470.96px;width:300px;text-align:center;top:371px;font-size:5.3px;color:#fbe0dc;font-weight:bold;transform:scaleX(0.86);transform-origin:50% 0;">-13.60%</div>
<div class="t" style="left:203.50px;width:300px;text-align:right;top:380px;font-size:5.0px;color:#666;">Office Desktop</div>
<div class="t" style="left:558.90px;top:380px;font-size:5.3px;color:#444;font-weight:bold;transform:scaleX(0.86);transform-origin:0 0;">216</div>
<div class="t" style="left:468.59px;width:300px;text-align:center;top:380px;font-size:5.3px;color:#fbe0dc;font-weight:bold;transform:scaleX(0.86);transform-origin:50% 0;">-15.29%</div>
<div class="t" style="left:203.50px;width:300px;text-align:right;top:390px;font-size:5.0px;color:#666;">Apple MacBook Pro 15"</div>
<div class="t" style="left:558.20px;top:390px;font-size:5.3px;color:#444;font-weight:bold;transform:scaleX(0.86);transform-origin:0 0;">214</div>
<div class="t" style="left:459.34px;width:300px;text-align:center;top:390px;font-size:5.3px;color:#d07090;font-weight:bold;transform:scaleX(0.86);transform-origin:50% 0;">-21.90%</div>
</body></html>
